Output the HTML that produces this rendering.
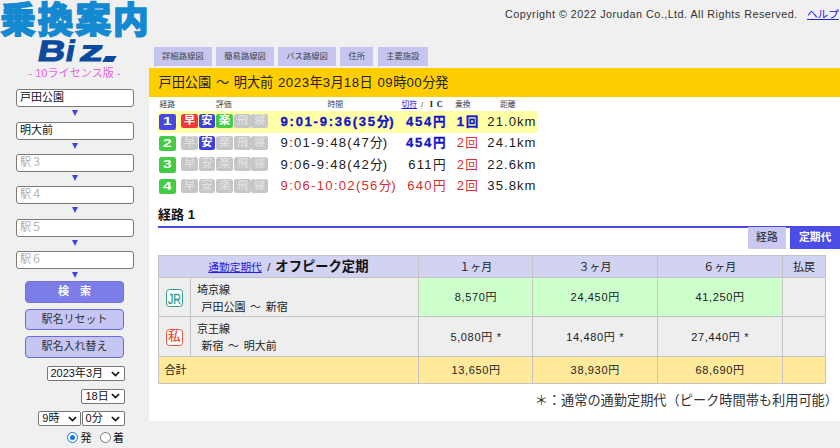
<!DOCTYPE html>
<html lang="ja">
<head>
<meta charset="utf-8">
<title>乗換案内Biz</title>
<style>
*{box-sizing:border-box;margin:0;padding:0}
html,body{width:840px;height:448px;overflow:hidden;background:#f0f0f0}
body{position:relative;font-family:"Liberation Sans","Noto Sans CJK JP",sans-serif;color:#222;font-size:11px}
.abs{position:absolute;white-space:nowrap}
a{color:#2222dd;text-decoration:underline}

/* logo */
#logo1{left:0px;top:-5.7px;font-size:36px;font-weight:900;color:#1488d0;letter-spacing:1.6px;line-height:54px;-webkit-text-stroke:1.2px #1488d0}
#logo2{left:0;top:0;color:#0b4a9e}
#logo2 span{position:absolute;top:33.5px;font-size:29.3px;font-weight:bold;line-height:34px;transform-origin:0 100%;-webkit-text-stroke:1px #0b4a9e}
#swoosh{left:103.7px;top:56.3px;width:10.5px;height:5.7px;background:#0b4a9e;transform:skewX(-30deg)}
#lic{left:0;width:149px;top:65px;text-align:center;color:#e564e0;font-size:11.1px;line-height:17px}

/* sidebar */
.inp{left:16px;width:118px;height:18px;background:#fff;border:1px solid #7a7a7a;border-radius:3px;font-size:11px;line-height:15px;padding-left:3px;color:#111}
.inp.ph{color:#b0b0b0}
.tri{left:71.5px;width:0;height:0;border-left:3.5px solid transparent;border-right:3.5px solid transparent;border-top:6px solid #4646d6}
.btn{left:25px;width:99px;height:21.5px;border-radius:4px;border:1px solid #6a6ad8;background:#c6c6f4;text-align:center;font-size:11px;line-height:19px;color:#333}
.btn.pri{background:#7d7de8;color:#fff;border-color:#7070dd;font-weight:bold}
.sel{height:15px;background:#fff;border:1px solid #767676;border-radius:2px;font-size:11px;line-height:13px;padding-left:3px;color:#111}
.sel svg{position:absolute;right:3.6px;top:3.6px}
.radio{width:11px;height:11px;border-radius:50%;background:#fff;border:1px solid #767676}
.radio.on{border:1.5px solid #1a73e8}
.radio.on::after{content:"";position:absolute;left:1.5px;top:1.5px;width:5px;height:5px;border-radius:50%;background:#1a73e8}

/* main */
#copy{left:505px;top:7px;font-size:10.8px;line-height:14px;color:#333;letter-spacing:0.47px}
#help{left:807px;top:7.3px;font-size:10.6px;line-height:14px}
.tab{top:47px;height:18.5px;background:#c6c5f0;text-align:center;font-size:8.3px;line-height:18.5px;color:#444}
#panel{left:149.2px;top:68px;width:690.8px;height:352.6px;background:#fff}
#ybar{left:149.2px;top:68px;width:690.8px;height:28.6px;background:#ffce00;font-size:13.2px;line-height:30.2px;padding-left:9.3px;color:#222}
#ybar{word-spacing:1px}
#ybar .D{letter-spacing:0.55px}
.ch{top:98.5px;font-size:7.8px;line-height:12px;color:#444}
.row{left:158px;width:380px;height:21.5px}
.row.hl{background:#ffffa8}
.nb{left:1px;top:3px;width:16.7px;height:15.3px;border-radius:2.5px;color:#fff;font-weight:bold;font-size:11.5px;line-height:15.3px;text-align:center;background:#44cc44}
.nb.b{background:#4848e0}
.nb .w{display:inline-block;transform:scaleX(1.35)}
.ev{top:3.2px;width:16.6px;height:13.8px;border-radius:2.5px;background:#c6c6c6;color:#e0e0e0;font-size:11.2px;line-height:13.8px;text-align:center;font-weight:500}
.ev.r{background:#f03838;color:#fff;font-weight:bold}
.ev.bl{background:#4040e0;color:#fff;font-weight:bold}
.ev.g{background:#44cc44;color:#fff;font-weight:bold}
.t .L{font-size:13.1px}
.t{top:0.5px;font-size:12.6px;line-height:21.5px;color:#222}
.t.bb{color:#1414c8;font-weight:bold;-webkit-text-stroke:0.3px #1414c8}
.t.rd{color:#d03030}
.L{letter-spacing:1.27px}
.bb .L{letter-spacing:1.7px}
.t .K{letter-spacing:1.05px}
.t .L{line-height:10px}

#rt{left:158px;top:204.5px;font-size:13px;font-weight:bold;line-height:20px;color:#111}
#bline{left:158px;top:225.5px;width:683px;height:2px;background:#4848dc}
.tb2{top:227px;height:21.5px;text-align:center;font-size:10.8px;line-height:21px}
table{position:absolute;left:157.5px;top:255.3px;border-collapse:collapse;font-size:11px;color:#222}
td,th{border:1px solid #c4c4c4;font-weight:normal;text-align:center;vertical-align:middle;white-space:nowrap;padding:0}
th{background:#d2d2f2;height:22.2px;padding-bottom:2px}
td{background:#eeeeee;padding-bottom:2px;word-spacing:1.5px}
td.g{background:#ccffcc}
tr.tot td{background:#ffe99a;height:26.7px}
td.nm{text-align:left;padding-left:6px;line-height:17.3px;padding-bottom:0;padding-top:2.8px}
.N{letter-spacing:0.65px}
.ic{display:inline-block;width:17.5px;height:17.5px;border-radius:3.5px;background:#fff;font-size:12.5px;line-height:15px;vertical-align:middle;position:relative;top:1.6px;overflow:hidden}
#note{right:2px;top:390.5px;font-size:13.2px;line-height:20px;color:#333}
</style>
</head>
<body>
<!-- logo -->
<div class="abs" id="logo1">乗換案内</div>
<div class="abs" id="logo2"><span style="left:35px;transform:skewX(-11deg) scaleX(1.3)">B</span><span style="left:63px;transform:skewX(-11deg) scaleX(1.1)">i</span><span style="left:77.3px;transform:skewX(-11deg) scaleX(1.6)">z</span></div>
<div class="abs" id="swoosh"></div>
<div class="abs" id="lic">- 10ライセンス版 -</div>

<!-- sidebar inputs -->
<div class="abs inp" style="top:89.2px">戸田公園</div>
<div class="abs tri" style="top:110.3px"></div>
<div class="abs inp" style="top:121.5px">明大前</div>
<div class="abs tri" style="top:142.6px"></div>
<div class="abs inp ph" style="top:153.8px">駅３</div>
<div class="abs tri" style="top:174.9px"></div>
<div class="abs inp ph" style="top:186.4px">駅４</div>
<div class="abs tri" style="top:207.2px"></div>
<div class="abs inp ph" style="top:218.9px">駅５</div>
<div class="abs tri" style="top:239.5px"></div>
<div class="abs inp ph" style="top:250.7px">駅６</div>
<div class="abs tri" style="top:271.8px"></div>

<div class="abs btn pri" style="top:281.2px">検　索</div>
<div class="abs btn" style="top:308.7px">駅名リセット</div>
<div class="abs btn" style="top:336.2px">駅名入れ替え</div>

<div class="abs sel" style="left:46.5px;top:366.4px;width:78.3px">2023年3月<svg width="9" height="6" viewBox="0 0 9 6"><path d="M0.9 1 L4.5 4.6 L8.1 1" fill="none" stroke="#111" stroke-width="1.7"/></svg></div>
<div class="abs sel" style="left:81.4px;top:388.7px;width:43.4px">18日<svg width="9" height="6" viewBox="0 0 9 6"><path d="M0.9 1 L4.5 4.6 L8.1 1" fill="none" stroke="#111" stroke-width="1.7"/></svg></div>
<div class="abs sel" style="left:38.3px;top:411.3px;width:42.8px">9時<svg width="9" height="6" viewBox="0 0 9 6"><path d="M0.9 1 L4.5 4.6 L8.1 1" fill="none" stroke="#111" stroke-width="1.7"/></svg></div>
<div class="abs sel" style="left:81.6px;top:411.3px;width:43.2px">0分<svg width="9" height="6" viewBox="0 0 9 6"><path d="M0.9 1 L4.5 4.6 L8.1 1" fill="none" stroke="#111" stroke-width="1.7"/></svg></div>
<div class="abs radio on" style="left:67.4px;top:432px"></div>
<div class="abs" style="left:80.5px;top:430px;font-size:11px;line-height:16px;color:#111">発</div>
<div class="abs radio" style="left:100px;top:432px"></div>
<div class="abs" style="left:113px;top:430px;font-size:11px;line-height:16px;color:#111">着</div>

<!-- top right -->
<div class="abs" id="copy">Copyright © 2022 Jorudan Co.,Ltd. All Rights Reserved.</div>
<a class="abs" id="help">ヘルプ</a>

<!-- tabs -->
<div class="abs tab" style="left:153.8px;width:58px">詳細路線図</div>
<div class="abs tab" style="left:216.3px;width:57.5px">簡易路線図</div>
<div class="abs tab" style="left:278.3px;width:57.5px">バス路線図</div>
<div class="abs tab" style="left:340.3px;width:33px">住所</div>
<div class="abs tab" style="left:378px;width:49.5px">主要施設</div>

<!-- panel -->
<div class="abs" id="panel"></div>
<div class="abs" id="ybar">戸田公園 ～ 明大前 <span class="D">2023</span>年<span class="D">3</span>月<span class="D">18</span>日 <span class="D">09</span>時<span class="D">00</span>分発</div>

<div class="abs ch" style="left:159.5px">経路</div>
<div class="abs ch" style="left:216px">評価</div>
<div class="abs ch" style="left:327.5px">時間</div>
<div class="abs ch" style="left:401.4px"><a>切符</a><span style="margin:0 6.5px 0 4px">/</span><b style="font-family:'Liberation Serif',serif;font-size:8.2px;letter-spacing:3.9px;color:#111">IC</b></div>
<div class="abs ch" style="left:455px">乗換</div>
<div class="abs ch" style="left:500px">距離</div>

<!-- rows -->
<div class="abs row hl" style="top:111.3px">
  <div class="abs nb b"><span class="w">1</span></div>
  <div class="abs ev r" style="left:23.2px">早</div><div class="abs ev bl" style="left:40.6px">安</div><div class="abs ev g" style="left:58.2px">楽</div><div class="abs ev" style="left:76.2px">飛</div><div class="abs ev" style="left:93.3px">寝</div>
  <div class="abs t bb" style="left:122.6px"><span class="L">9:01-9:36(35</span>分<span class="L">)</span></div>
  <div class="abs t bb" style="right:92.5px"><span class="L">454</span>円</div>
  <div class="abs t bb" style="left:298.7px"><span class="L">1</span>回</div>
  <div class="abs t" style="left:329.3px"><span class="L K">21.0km</span></div>
</div>
<div class="abs row" style="top:132.8px">
  <div class="abs nb"><span class="w">2</span></div>
  <div class="abs ev" style="left:23.2px">早</div><div class="abs ev bl" style="left:40.6px">安</div><div class="abs ev" style="left:58.2px">楽</div><div class="abs ev" style="left:76.2px">飛</div><div class="abs ev" style="left:93.3px">寝</div>
  <div class="abs t" style="left:122.6px"><span class="L">9:01-9:48(47</span>分<span class="L">)</span></div>
  <div class="abs t bb" style="right:92.5px"><span class="L">454</span>円</div>
  <div class="abs t rd" style="left:298.7px"><span class="L">2</span>回</div>
  <div class="abs t" style="left:329.3px"><span class="L K">24.1km</span></div>
</div>
<div class="abs row" style="top:154.3px">
  <div class="abs nb"><span class="w">3</span></div>
  <div class="abs ev" style="left:23.2px">早</div><div class="abs ev" style="left:40.6px">安</div><div class="abs ev" style="left:58.2px">楽</div><div class="abs ev" style="left:76.2px">飛</div><div class="abs ev" style="left:93.3px">寝</div>
  <div class="abs t" style="left:122.6px"><span class="L">9:06-9:48(42</span>分<span class="L">)</span></div>
  <div class="abs t" style="right:92.5px"><span class="L">611</span>円</div>
  <div class="abs t rd" style="left:298.7px"><span class="L">2</span>回</div>
  <div class="abs t" style="left:329.3px"><span class="L K">22.6km</span></div>
</div>
<div class="abs row" style="top:175.8px">
  <div class="abs nb"><span class="w">4</span></div>
  <div class="abs ev" style="left:23.2px">早</div><div class="abs ev" style="left:40.6px">安</div><div class="abs ev" style="left:58.2px">楽</div><div class="abs ev" style="left:76.2px">飛</div><div class="abs ev" style="left:93.3px">寝</div>
  <div class="abs t rd" style="left:122.6px"><span class="L">9:06-10:02(56</span>分<span class="L">)</span></div>
  <div class="abs t rd" style="right:92.5px"><span class="L">640</span>円</div>
  <div class="abs t rd" style="left:298.7px"><span class="L">2</span>回</div>
  <div class="abs t" style="left:329.3px"><span class="L K">35.8km</span></div>
</div>

<div class="abs" id="rt">経路 <span style="letter-spacing:1px">1</span></div>
<div class="abs" id="bline"></div>
<div class="abs tb2" style="left:748px;width:37.8px;background:#c8c8f0;color:#222">経路</div>
<div class="abs tb2" style="left:790.3px;width:49.7px;background:#4c4ce6;color:#fff;font-weight:bold">定期代</div>

<table>
<tr><th colspan="2" style="width:260.8px"><a style="font-size:10.7px">通勤定期代</a><span style="margin:0 5px 0 5.5px">/</span><b style="font-size:13.3px;color:#111">オフピーク定期</b></th><th style="width:113.8px">１ヶ月</th><th style="width:124.6px">３ヶ月</th><th style="width:125.3px">６ヶ月</th><th style="width:43px">払戻</th></tr>
<tr style="height:39px"><td style="width:32.5px"><span class="ic" style="border:1.5px solid #2a9d8f;color:#2a9d8f;-webkit-text-stroke:0.35px #2a9d8f"><span style="display:inline-block;font-size:15.5px;line-height:15px;transform:scaleX(0.68);transform-origin:50% 50%;margin:0 -5px;position:relative;top:0.5px">JR</span></span></td><td class="nm">埼京線<br>&nbsp;戸田公園 ～ 新宿</td><td class="g"><span class="N">8,570</span>円</td><td class="g"><span class="N">24,450</span>円</td><td class="g"><span class="N">41,250</span>円</td><td></td></tr>
<tr style="height:39.5px"><td><span class="ic" style="border:1.5px solid #e85040;color:#e85040;font-weight:500">私</span></td><td class="nm">京王線<br>&nbsp;新宿 ～ 明大前</td><td><span class="N">5,080</span>円 *</td><td><span class="N">14,480</span>円 *</td><td><span class="N">27,440</span>円 *</td><td></td></tr>
<tr class="tot"><td colspan="2" style="text-align:left;padding-left:6px">合計</td><td><span class="N">13,650</span>円</td><td><span class="N">38,930</span>円</td><td><span class="N">68,690</span>円</td><td></td></tr>
</table>

<div class="abs" id="note">＊：通常の通勤定期代（ピーク時間帯も利用可能）</div>
</body>
</html>
